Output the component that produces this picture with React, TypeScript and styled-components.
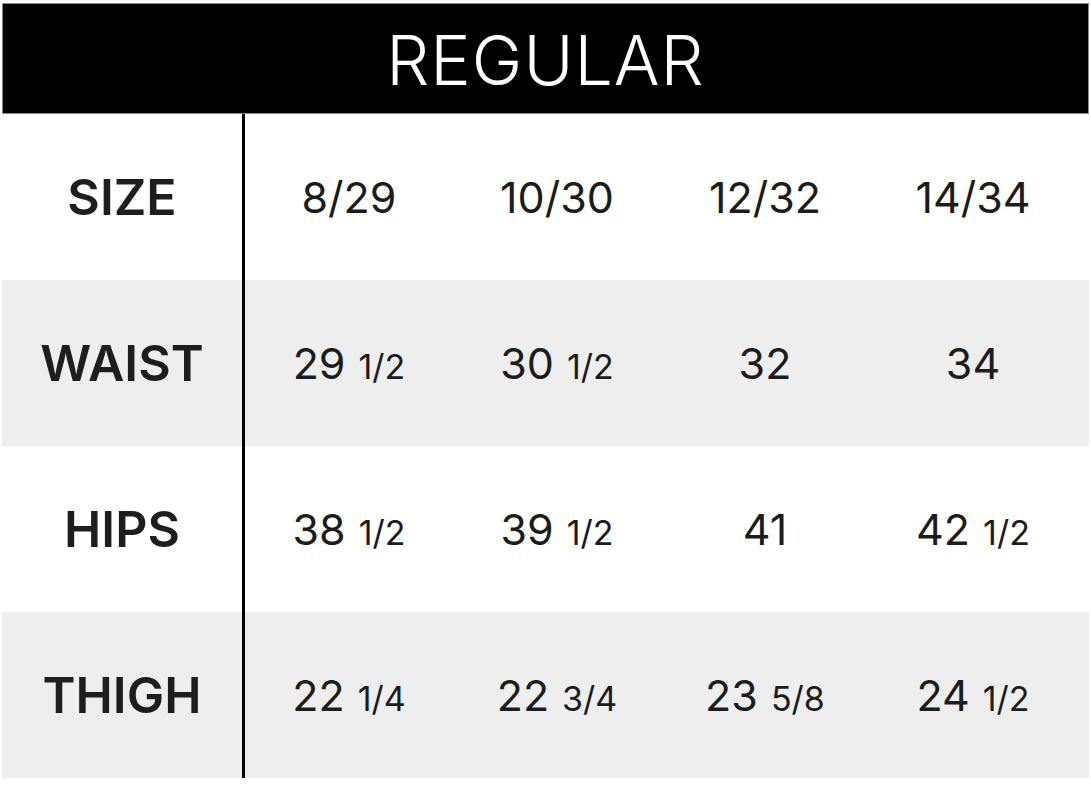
import React from 'react';
import styled, { createGlobalStyle } from 'styled-components';

const GlobalStyle = createGlobalStyle`
  html, body {
    margin: 0;
    padding: 0;
    background: #ffffff;
  }
  body {
    font-family: Inter, "Open Sans", "Liberation Sans", sans-serif;
    color: #1c1c1c;
  }
`;

type Value = { whole: string; frac?: string };

const rows: { label: string; values: Value[] }[] = [
  {
    label: 'SIZE',
    values: [{ whole: '8/29' }, { whole: '10/30' }, { whole: '12/32' }, { whole: '14/34' }]
  },
  {
    label: 'WAIST',
    values: [
      { whole: '29', frac: '1/2' },
      { whole: '30', frac: '1/2' },
      { whole: '32' },
      { whole: '34' }
    ]
  },
  {
    label: 'HIPS',
    values: [
      { whole: '38', frac: '1/2' },
      { whole: '39', frac: '1/2' },
      { whole: '41' },
      { whole: '42', frac: '1/2' }
    ]
  },
  {
    label: 'THIGH',
    values: [
      { whole: '22', frac: '1/4' },
      { whole: '22', frac: '3/4' },
      { whole: '23', frac: '5/8' },
      { whole: '24', frac: '1/2' }
    ]
  }
];

export default function App() {
  return (
    <Page>
      <GlobalStyle />
      <Chart>
        <Header>REGULAR</Header>
        {rows.map((row, i) => (
          <Row key={row.label} $shaded={i % 2 === 1}>
            <Label>{row.label}</Label>
            {row.values.map((v, j) => (
              <Cell key={j}>
                <Whole>{v.whole}</Whole>
                {v.frac && <Frac>{v.frac}</Frac>}
              </Cell>
            ))}
          </Row>
        ))}
      </Chart>
    </Page>
  );
}

const Page = styled.div`
  width: 1091px;
  height: 795px;
  padding: 3px 2px 0 2px;
  box-sizing: border-box;
`;

const Chart = styled.div`
  display: flex;
  flex-direction: column;
  width: 1087px;
`;

const Header = styled.div`
  height: 111px;
  background: #000000;
  border: 1px solid #8a8a8a;
  box-sizing: border-box;
  color: #ffffff;
  display: flex;
  align-items: center;
  justify-content: center;
  font-size: 68px;
  font-weight: 300;
  letter-spacing: 1px;
  padding-top: 2px;
`;

const Row = styled.div<{ $shaded: boolean }>`
  height: 166px;
  display: grid;
  grid-template-columns: 243px repeat(4, 208px) 1fr;
  background: ${(p) => (p.$shaded ? '#eeeeee' : '#ffffff')};
`;

const Label = styled.div`
  display: flex;
  align-items: center;
  justify-content: center;
  font-size: 50px;
  font-weight: 600;
  color: #1e1e1e;
  border-right: 3px solid #000000;
`;

const Cell = styled.div`
  display: flex;
  align-items: baseline;
  justify-content: center;
  align-self: center;
  gap: 13px;
`;

const Whole = styled.span`
  font-size: 43px;
  font-weight: 400;
  color: #1c1c1c;
`;

const Frac = styled.span`
  font-size: 34px;
  font-weight: 400;
  color: #1c1c1c;
`;
